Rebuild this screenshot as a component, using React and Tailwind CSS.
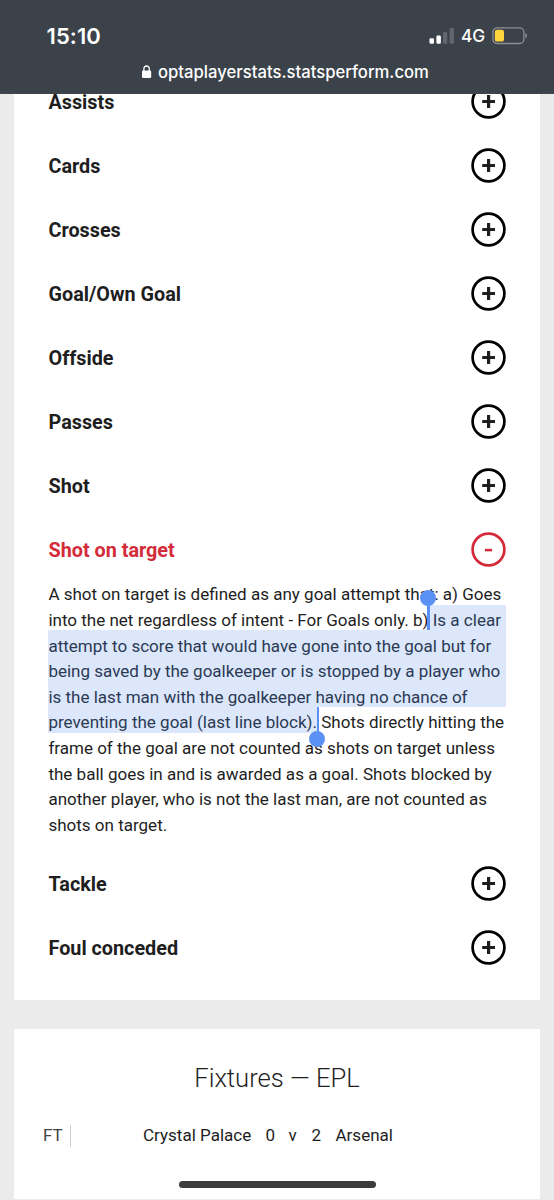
import React from "react";

const before = ["Assists", "Cards", "Crosses", "Goal/Own Goal", "Offside", "Passes", "Shot"];
const after = ["Tackle", "Foul conceded"];

function ToggleIcon({ open }) {
  return (
    <svg width="36" height="36" viewBox="0 0 36 36" className="shrink-0" fill="none" stroke="currentColor" aria-hidden="true">
      <circle cx="18.5" cy="17.5" r="15.9" strokeWidth="2.7" className={open ? "" : "stroke-black"} />
      {open ? <path d="M14.9 18.1h7.2" strokeWidth="2.5" /> : <path d="M12.2 17.5h12.8M18.6 11.1v12.8" strokeWidth="3.2" />}
    </svg>
  );
}

function Row({ title, open = false }) {
  return (
    <button className={`flex h-16 w-full items-center justify-between text-left text-[19.8px] font-bold ${open ? "text-[#d42b3a]" : "text-[#1e1e1e]"}`}>
      <span className="pl-[0.5px] pt-[2px]">{title}</span>
      <ToggleIcon open={open} />
    </button>
  );
}

function Line({ children, selected = false }) {
  return <span className={`block h-[25.6px] whitespace-nowrap ${selected ? "bg-[#dce7fb] text-[#2b3a54]" : ""}`}><span className="relative top-[3.4px]">{children}</span></span>;
}

function Definition() {
  return (
    <p className="-mt-[3px] h-[273px] w-[458px] pl-[0.4px] text-[17.02px] leading-[25.6px] text-[#1e1e1e]">
      <Line>A shot on target is defined as any goal attempt that: a) Goes</Line>
      <span className="flex h-[25.6px] whitespace-nowrap">
        <span className="relative top-[3.4px]">into the net regardless of intent - For Goals only. b)</span>
        <span className="relative flex-1 bg-[#dce7fb] whitespace-pre text-[#2b3a54]">
          <span className="relative top-[3.4px]">{" Is a clear"}</span>
          <span className="absolute -left-[1.5px] top-0 h-full w-[2.5px] bg-[#5b91f5]" />
          <span className="absolute -left-[9px] -top-[15px] size-4 rounded-full bg-[#5b91f5]" />
        </span>
      </span>
      <Line selected>attempt to score that would have gone into the goal but for</Line>
      <Line selected>being saved by the goalkeeper or is stopped by a player who</Line>
      <Line selected>is the last man with the goalkeeper having no chance of</Line>
      <span className="flex h-[25.6px] whitespace-nowrap">
        <span className="relative bg-[#dce7fb] text-[#2b3a54]">
          <span className="relative top-[3.4px]">preventing the goal (last line block).</span>
          <span className="absolute -right-[2px] top-0 h-full w-[2.5px] bg-[#5b91f5]" />
          <span className="absolute -right-[8px] top-[24px] z-10 size-4 rounded-full bg-[#5b91f5]" />
        </span>
        <span className="relative top-[3.4px] whitespace-pre">{" Shots directly hitting the"}</span>
      </span>
      <Line>frame of the goal are not counted as shots on target unless</Line>
      <Line>the ball goes in and is awarded as a goal. Shots blocked by</Line>
      <Line>another player, who is not the last man, are not counted as</Line>
      <Line>shots on target.</Line>
    </p>
  );
}

function StatusBar() {
  return (
    <header className="relative z-20 h-[94px] shrink-0 border-b border-[#3f464e] bg-[#3b424a] pt-[21px] font-[Inter,sans-serif] text-white">
      <div className="flex h-[30px] items-center justify-between pl-[46.5px] pr-[26px]">
        <span className="text-[22px] font-semibold leading-none tracking-[0.1px]">15:10</span>
        <div className="flex items-center">
          <svg width="26" height="18" viewBox="0 0 26 18" fill="white" aria-hidden="true">
            <rect x="0.5" y="11.2" width="4.5" height="5.5" rx="1.2" />
            <rect x="7.4" y="8.5" width="4.5" height="8.2" rx="1.2" />
            <rect x="14" y="5" width="4.3" height="11.7" rx="1.2" opacity="0.2" />
            <rect x="20.6" y="1" width="4.3" height="15.7" rx="1.2" opacity="0.2" />
          </svg>
          <span className="ml-[6px] w-[31px] text-[17.3px] font-medium leading-none tracking-[-0.2px]">4G</span>
          <svg width="36" height="18" viewBox="0 0 36 18" fill="none" aria-hidden="true">
            <rect x="0.9" y="0.9" width="31" height="15.6" rx="4.2" stroke="#8b8f94" strokeWidth="1.3" />
            <rect x="2.8" y="2.8" width="9.2" height="11.8" rx="2.2" fill="#fdd43b" />
            <path d="M33.3 6c2.3 1 2.3 4.4 0 5.4z" fill="#8b8f94" />
          </svg>
        </div>
      </div>
      <div className="mt-[8px] flex h-[25px] items-center pl-[142px]">
        <svg width="10" height="14" viewBox="0 0 10 14" aria-hidden="true">
          <rect x="0" y="5.6" width="9.2" height="7.5" rx="1.3" fill="white" />
          <path d="M1.9 7V3.7a2.7 2.7 0 0 1 5.4 0V7" fill="none" stroke="white" strokeWidth="1.3" />
        </svg>
        <span className="ml-[6px] whitespace-nowrap pt-px text-[16.66px] font-medium leading-none">optaplayerstats.statsperform.com</span>
      </div>
    </header>
  );
}

export default function App() {
  return (
    <div className="relative flex h-[1200px] w-[554px] flex-col overflow-hidden bg-[#ebebeb] font-[Roboto,sans-serif]">
      <StatusBar />
      <main className="-mt-6 flex flex-col gap-[29px] px-[14px]">
        <section className="h-[930px] bg-white px-[34px]">
          {before.map((title) => <Row key={title} title={title} />)}
          <Row title="Shot on target" open />
          <Definition />
          {after.map((title) => <Row key={title} title={title} />)}
        </section>
        <section className="h-[170px] bg-white pt-[31px] text-[#1e1e1e]">
          <h2 className="text-center text-[25.6px] font-light leading-[36px]">Fixtures — EPL</h2>
          <div className="mt-[28px] flex h-[24px] items-center whitespace-nowrap text-[17.02px]">
            <span className="ml-[28px] flex h-[22px] w-[29px] items-center border-r border-[#cfcfcf] pl-px text-[#444]">FT</span>
            <span className="ml-[72px] w-[122.5px]">Crystal Palace</span>
            <span className="w-[23px]">0</span>
            <span className="w-[23px]">v</span>
            <span className="w-[24px]">2</span>
            <span>Arsenal</span>
          </div>
        </section>
      </main>
      <div className="absolute bottom-[12px] left-[179px] h-[7px] w-[197px] rounded-full bg-[#3b3d3c]" />
    </div>
  );
}
